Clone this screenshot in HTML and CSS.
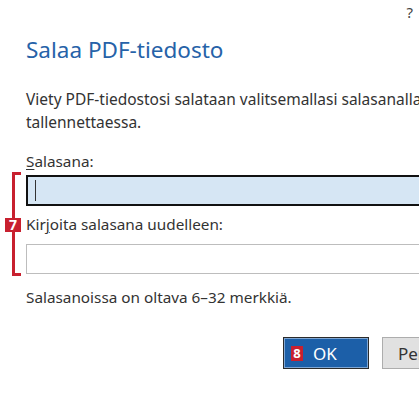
FILE: index.html
```html
<!DOCTYPE html>
<html lang="fi">
<head>
    <meta charset="UTF-8">
    <meta name="viewport" content="width=device-width, initial-scale=1.0">
    <title>Salaa PDF-tiedosto</title>
    <link rel="stylesheet" href="styles.css">
</head>
<body>
    <div class="dialog">
        <div class="help">?</div>
        <h1 class="title">Salaa PDF-tiedosto</h1>
        <p class="intro">Viety PDF-tiedostosi salataan valitsemallasi salasanalla<br>tallennettaessa.</p>
        <div class="fields">
            <div class="bracket"></div>
            <span class="badge badge-side">7</span>
            <label class="label"><u>S</u>alasana:</label>
            <div class="box box-active"><span class="caret"></span></div>
            <label class="label label-second">Kir<u>j</u>oita salasana uudelleen:</label>
            <div class="box box-second"></div>
        </div>
        <p class="hint">Salasanoissa on oltava 6–32 merkkiä.</p>
        <div class="buttons">
            <button class="btn btn-ok"><span class="badge">8</span>OK</button>
            <button class="btn btn-cancel">Peruuta</button>
        </div>
    </div>
</body>
</html>
```

FILE: styles.css
```css
body {
    margin: 0;
    padding: 0;
    background: #fff;
    font-family: "Noto Sans", Arial, sans-serif;
    color: #333;
    overflow: hidden;
}
.dialog {
    width: 442px;
    padding: 0 26px;
}
.help {
    text-align: right;
    margin-right: 55px;
    font-size: 15px;
    line-height: 24px;
    color: #444;
}
.title {
    margin: 11px 0 0;
    font-size: 22.5px;
    font-weight: normal;
    line-height: 30px;
    color: #2662a8;
}
.intro {
    margin: 23px 0 0;
    font-size: 15.5px;
    line-height: 23px;
    white-space: nowrap;
}
.fields {
    position: relative;
    margin-top: 17px;
}
.label {
    display: block;
    font-size: 15.3px;
    line-height: 20px;
}
.label u {
    text-decoration-thickness: 1px;
    text-underline-offset: 2px;
}
.label-second {
    margin-top: 8px;
}
.box {
    box-sizing: border-box;
    height: 31px;
    margin-top: 4px;
    border: 2px solid #111;
    background: #d6e6f4;
    padding: 3px 7px;
}
.box-second {
    height: 30px;
    margin-top: 10px;
    border: 1px solid #bdbdbd;
    background: #fff;
}
.caret {
    display: block;
    width: 1px;
    height: 21px;
    background: #333;
}
.bracket {
    position: absolute;
    left: -14px;
    top: 21px;
    width: 6px;
    height: 98px;
    border: 3px solid #c8202f;
    border-right: none;
}
.badge {
    display: inline-block;
    width: 12px;
    height: 15px;
    background: #c8202f;
    color: #fff;
    font-weight: bold;
    font-size: 13px;
    line-height: 15px;
    text-align: center;
    margin-right: 10px;
}
.badge-side {
    position: absolute;
    left: -21px;
    top: 67px;
    width: 16px;
    height: 14px;
    line-height: 14px;
    font-size: 14px;
    margin: 0;
}
.hint {
    margin: 13px 0 0;
    font-size: 15.3px;
    line-height: 20px;
}
.buttons {
    display: flex;
    justify-content: flex-end;
    gap: 13px;
    margin-top: 30px;
}
.btn {
    box-sizing: border-box;
    width: 86px;
    height: 32px;
    font-family: "Noto Sans", Arial, sans-serif;
    font-size: 17px;
    padding: 0 7px;
    display: flex;
    align-items: center;
}
.btn-ok {
    background: #1c5fa8;
    color: #fff;
    border: 1px solid #2b2b2b;
    box-shadow: inset 0 0 0 1px #7ea6d4;
}
.btn-cancel {
    background: #e1e1e1;
    color: #333;
    border: 1px solid #adadad;
    padding-left: 15px;
}
```
